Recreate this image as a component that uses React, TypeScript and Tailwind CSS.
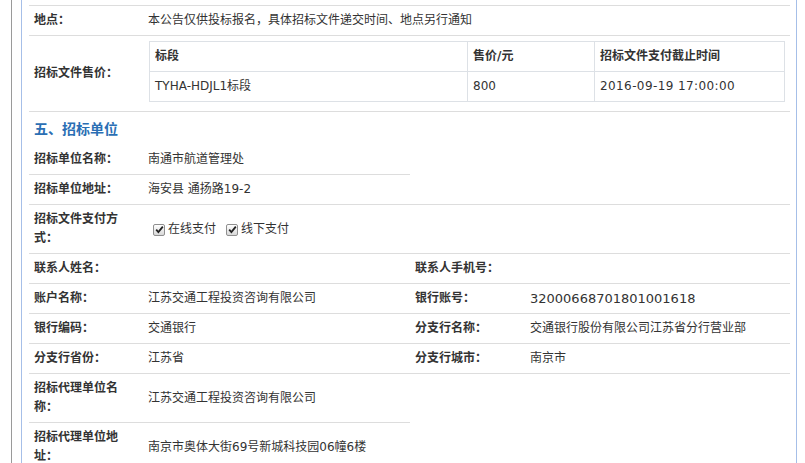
import React from 'react';

const cell = 'flex items-center px-[5px] py-[5px] leading-[19px] border-b border-[#dddddd]';
const label = cell + ' font-bold';

function Label({ children }: { children: React.ReactNode }) {
  return <div className={label}>{children}</div>;
}

function Value({ children, span }: { children?: React.ReactNode; span?: 'half' | 'full' }) {
  return (
    <div className={span === 'full' ? cell + ' col-span-3' : cell}>{children}</div>
  );
}

function CheckBox({ text }: { text: string }) {
  return (
    <span className="inline-flex items-center ml-[5px] mr-[5px]">
      <span className="w-[12px] h-[12px] rounded-[2px] border border-[#8f8f8f] bg-gradient-to-b from-[#ffffff] to-[#d8d8d8] flex items-center justify-center mr-[3px]">
        <svg width="9" height="9" viewBox="0 0 9 9">
          <path d="M1.2 4.6 L3.4 7 L7.8 1.6" fill="none" stroke="#222" strokeWidth="1.8" />
        </svg>
      </span>
      <span>{text}</span>
    </span>
  );
}

export default function App() {
  return (
    <div
      className="min-h-[463px] bg-white text-[12px] text-[#333333] pl-[11px]"
      style={{ fontFamily: '"DejaVu Sans", "Noto Sans CJK SC", sans-serif' }}
    >
      <div className="border-l border-[#9a9a9a] pl-[9px] min-h-[463px]">
        <div className="w-[776px] border-l border-r border-[#a6bfe8] pl-[7px] pr-[6px] min-h-[463px]">
          <div className="h-[6px] border-b border-[#dddddd]" />
          <div className="grid grid-cols-[114px_267px_115px_265px]">
            {/* 地点 */}
            <Label>地点：</Label>
            <Value span="full">本公告仅供投标报名，具体招标文件递交时间、地点另行通知</Value>

            {/* 招标文件售价 */}
            <Label>招标文件售价：</Label>
            <div className="col-span-3 border-b border-[#dddddd] px-[5px] pt-[5px] pb-[9px]">
              <div className="ml-px grid grid-cols-[318px_127px_1fr] border-l border-t border-[#dde1e6]">
                <div className="px-[5px] py-[5px] leading-[19px] font-bold border-r border-b border-[#dde1e6]">标段</div>
                <div className="px-[5px] py-[5px] leading-[19px] font-bold border-r border-b border-[#dde1e6]">售价/元</div>
                <div className="px-[5px] py-[5px] leading-[19px] font-bold border-r border-b border-[#dde1e6]">招标文件支付截止时间</div>
                <div className="px-[5px] py-[5px] leading-[19px] border-r border-b border-[#dde1e6]">TYHA-HDJL1标段</div>
                <div className="px-[5px] py-[5px] leading-[19px] border-r border-b border-[#dde1e6]">800</div>
                <div className="px-[5px] py-[5px] leading-[19px] tracking-[0.4px] border-r border-b border-[#dde1e6]">2016-09-19 17:00:00</div>
              </div>
            </div>

            {/* 五、招标单位 */}
            <div className="col-span-4 px-[5px] pt-[8px] pb-[6px] leading-[19px] text-[14px] font-bold text-[#2b6fb4]">
              五、招标单位
            </div>

            <Label>招标单位名称：</Label>
            <Value>南通市航道管理处</Value>
            <div className="col-span-2" />

            <Label>招标单位地址：</Label>
            <Value span="full">海安县 通扬路19-2</Value>

            <Label>招标文件支付方式：</Label>
            <Value span="full">
              <span className="flex items-center pt-px">
                <CheckBox text="在线支付" />
                <CheckBox text="线下支付" />
              </span>
            </Value>

            <Label>联系人姓名：</Label>
            <Value />
            <Label>联系人手机号：</Label>
            <Value />

            <Label>账户名称：</Label>
            <Value>江苏交通工程投资咨询有限公司</Value>
            <Label>银行账号：</Label>
            <Value><span className="text-[13px]">32000668701801001618</span></Value>

            <Label>银行编码：</Label>
            <Value>交通银行</Value>
            <Label>分支行名称：</Label>
            <Value>交通银行股份有限公司江苏省分行营业部</Value>

            <Label>分支行省份：</Label>
            <Value>江苏省</Value>
            <Label>分支行城市：</Label>
            <Value>南京市</Value>

            <Label>招标代理单位名称：</Label>
            <Value>江苏交通工程投资咨询有限公司</Value>
            <div className="col-span-2" />

            <Label>招标代理单位地址：</Label>
            <Value>南京市奥体大街69号新城科技园06幢6楼</Value>
            <div className="col-span-2" />
          </div>
        </div>
      </div>
    </div>
  );
}
